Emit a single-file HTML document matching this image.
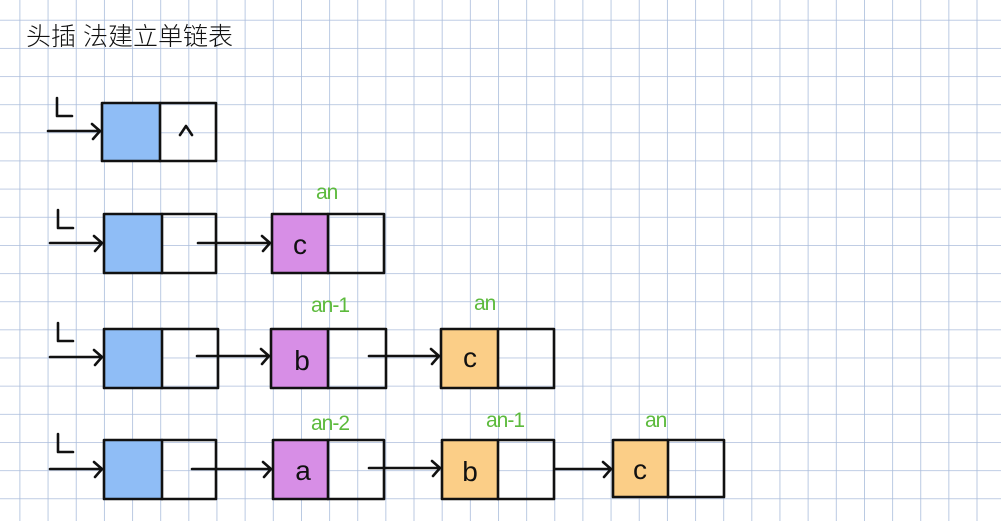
<!DOCTYPE html>
<html><head><meta charset="utf-8"><style>
html,body{margin:0;padding:0;background:#fff;width:1001px;height:521px;overflow:hidden}
svg{display:block}
text{font-family:"Liberation Sans","Noto Sans CJK SC",sans-serif}
</style></head><body>
<svg width="1001" height="521" viewBox="0 0 1001 521" xmlns="http://www.w3.org/2000/svg">
<defs>
<pattern id="g" x="19.5" y="19.8" width="28.15" height="28.15" patternUnits="userSpaceOnUse">
<path d="M0 0H28.15M0 0V28.15" stroke="#aabcdb" stroke-width="1.6" fill="none"/>
</pattern>
</defs>
<rect width="1001" height="521" fill="#fff"/>
<rect width="1001" height="521" fill="url(#g)"/>
<text x="26" y="45" font-size="25" fill="#111" font-weight="300">头插 法建立单链表</text>

<g stroke="#111" stroke-width="2.6" fill="none" stroke-linecap="round" stroke-linejoin="round">
<rect x="102" y="103" width="58" height="58" fill="#8fbdf6" stroke="none"/>
<rect x="102" y="103" width="114" height="58"/><line x1="160" y1="103" x2="160" y2="161"/>
<path d="M57 98V116H72"/><path d="M48 131H100M92 124L100 131L93 139"/>
<path d="M180 135L186 126L192 135"/>
<rect x="104" y="214" width="58" height="59" fill="#8fbdf6" stroke="none"/>
<rect x="104" y="214" width="112" height="59"/><line x1="162" y1="214" x2="162" y2="273"/>
<path d="M58 210V228H73"/><path d="M50 243H102M94 236L102 243L95 251"/>
<rect x="272" y="214" width="56" height="59" fill="#d78ee6" stroke="none"/>
<rect x="272" y="214" width="112" height="59"/><line x1="328" y1="214" x2="328" y2="273"/>
<path d="M198 243H270M262 236L270 243L263 251"/>
<rect x="104" y="329" width="58" height="59" fill="#8fbdf6" stroke="none"/>
<rect x="104" y="329" width="114" height="59"/><line x1="162" y1="329" x2="162" y2="388"/>
<path d="M58 323V341H73"/><path d="M50 357H102M94 350L102 357L95 365"/>
<rect x="271" y="329" width="57" height="59" fill="#d78ee6" stroke="none"/>
<rect x="271" y="329" width="115" height="59"/><line x1="328" y1="329" x2="328" y2="388"/>
<path d="M197 356H269M261 349L269 356L262 364"/>
<rect x="441" y="329" width="57" height="59" fill="#fbce87" stroke="none"/>
<rect x="441" y="329" width="113" height="59"/><line x1="498" y1="329" x2="498" y2="388"/>
<path d="M369 356H439M431 349L439 356L432 364"/>
<rect x="104" y="440" width="58" height="59" fill="#8fbdf6" stroke="none"/>
<rect x="104" y="440" width="112" height="59"/><line x1="162" y1="440" x2="162" y2="499"/>
<path d="M58 434V452H73"/><path d="M50 469H102M94 462L102 469L95 477"/>
<rect x="273" y="440" width="55" height="59" fill="#d78ee6" stroke="none"/>
<rect x="273" y="440" width="111" height="59"/><line x1="328" y1="440" x2="328" y2="499"/>
<path d="M192 469H271M263 462L271 469L264 477"/>
<rect x="442" y="440" width="56" height="59" fill="#fbce87" stroke="none"/>
<rect x="442" y="440" width="112" height="59"/><line x1="498" y1="440" x2="498" y2="499"/>
<path d="M369 468H440M432 461L440 468L433 476"/>
<rect x="613" y="440" width="55" height="57" fill="#fbce87" stroke="none"/>
<rect x="613" y="440" width="111" height="57"/><line x1="668" y1="440" x2="668" y2="497"/>
<path d="M555 469H611M603 462L611 469L604 477"/>
</g>
<g font-size="28" fill="#111" text-anchor="middle">
<text x="300" y="254">c</text>
<text x="302" y="370">b</text>
<text x="470" y="367">c</text>
<text x="303" y="480">a</text>
<text x="470" y="481">b</text>
<text x="640" y="479">c</text>
</g>
<g font-size="21" fill="#5cba3c" letter-spacing="-1">
<text x="316" y="199">an</text>
<text x="311" y="312">an-1</text>
<text x="474" y="310">an</text>
<text x="311" y="430">an-2</text>
<text x="486" y="427">an-1</text>
<text x="645" y="427">an</text>
</g>
</svg>
</body></html>
